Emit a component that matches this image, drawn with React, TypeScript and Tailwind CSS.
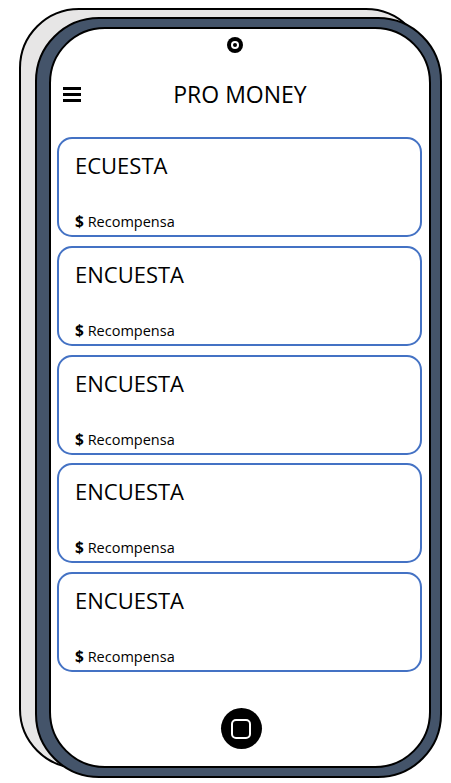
import React from "react";

const Card = ({ title }: { title: string }) => (
  <div className="h-[100px] shrink-0 rounded-[15px] border-2 border-[#4472c4] bg-white pl-[16px] pt-[11px]">
    <div className="text-[22px] leading-[30px] text-black">{title}</div>
    <div className="mt-[31px] text-[14.5px] leading-[20px] text-black">
      <span className="text-[15.5px] font-bold">$</span> Recompensa
    </div>
  </div>
);

export default function App() {
  const titles = ["ECUESTA", "ENCUESTA", "ENCUESTA", "ENCUESTA", "ENCUESTA"];
  return (
    <div
      className="relative h-[783px] w-[451px] overflow-hidden bg-white pl-[35px] pt-[17px]"
      style={{ fontFamily: '"Open Sans", "Noto Sans", sans-serif' }}
    >
      <div className="absolute left-[19px] top-[8px] h-[761px] w-[407px] rounded-[60px] border-2 border-black bg-[#e7e6e6]" />
      <div className="relative h-[761px] w-[407px] rounded-[64px] border-2 border-black bg-[#44546a] pb-[8px] pl-[12px] pr-[9px] pt-[8px]">
        <div className="flex h-[741px] w-[382px] flex-col rounded-[56px] border-2 border-black bg-white">
          <div className="mt-[8px] flex justify-start pl-[176px]">
            <div className="flex h-[16px] w-[16px] items-center justify-center rounded-full bg-black">
              <div className="flex h-[8px] w-[8px] items-center justify-center rounded-full bg-white">
                <div className="h-[4px] w-[4px] rounded-full bg-black" />
              </div>
            </div>
          </div>
          <div className="mt-[25.5px] flex items-center">
            <div className="ml-[12px] flex w-[18px] flex-col gap-[3px] pt-[1px]">
              <div className="h-[3px] w-[18px] bg-black" />
              <div className="h-[3px] w-[18px] bg-black" />
              <div className="h-[3px] w-[18px] bg-black" />
            </div>
            <div className="flex-1 pr-[30px] text-center text-[23px] leading-[30px] text-black">
              PRO MONEY
            </div>
          </div>
          <div className="ml-[6px] mr-[7px] mt-[28.5px] flex flex-col gap-[8.75px]">
            {titles.map((t, i) => (
              <Card key={i} title={t} />
            ))}
          </div>
          <div className="mt-[36px] flex justify-center pl-[2px]">
            <div className="flex h-[41px] w-[41px] items-center justify-center rounded-full bg-black">
              <div className="h-[20px] w-[20px] rounded-[5px] border-2 border-white bg-black" />
            </div>
          </div>
        </div>
      </div>
    </div>
  );
}
